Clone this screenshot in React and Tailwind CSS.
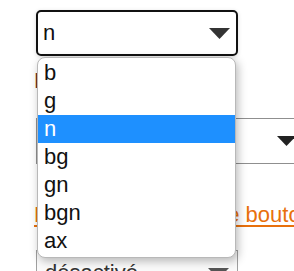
import { useState } from 'react';

const options = ['b', 'g', 'n', 'bg', 'gn', 'bgn', 'ax'];

function Caret({ className }) {
  return (
    <svg viewBox="0 0 21 11" className={className}>
      <path d="M0 0h21L10.5 11z" fill="currentColor" />
    </svg>
  );
}

export default function App() {
  const [selected] = useState('n');

  return (
    <div className="relative w-[294px] h-[271px] overflow-hidden bg-white font-['Liberation_Sans',Arial,sans-serif] text-[22px] text-[#111]">
      <div className="flex flex-col pl-9 pt-2.5">
        {/* open select */}
        <div className="w-[202px] h-[46px] border-2 border-[#111] rounded-[5px] flex items-center justify-between pl-[5px] pr-[6px] shadow-[0_1px_4px_rgba(0,0,0,0.15)]">
          <span className="leading-none">{selected}</span>
          <Caret className="w-[21px] h-[11px] text-[#333]" />
        </div>

        <p className="mt-[14px] -ml-[2px] leading-none text-[#6b3322]">Libellé</p>

        <div className="mt-[26px] w-[270px] h-[46px] border border-[#8f8f8f] flex items-center justify-between pl-2 pr-2">
          <span className="leading-none">activé</span>
          <Caret className="w-[21px] h-[10px] text-[#222]" />
        </div>

        <a href="#" className="mt-[40px] -ml-[2px] leading-none text-[#e8700c] underline underline-offset-[3px] whitespace-nowrap">
          Lien pour réactiver le bouton
        </a>

        <div className="mt-[24px] w-[202px] h-[46px] border border-[#a0a0a0] bg-[#fafafa] flex items-center justify-between pl-2 pr-2 text-[#333]">
          <span className="leading-none">désactivé</span>
          <Caret className="w-[21px] h-[11px] text-[#555]" />
        </div>
      </div>

      {/* dropdown list */}
      <ul className="absolute left-[37px] top-[57px] w-[199px] rounded-[8px] border border-[#b8b8b8] bg-white pt-px pb-[2px] overflow-hidden shadow-[2px_3px_10px_rgba(0,0,0,0.28)]">
        {options.map((o) => (
          <li
            key={o}
            className={
              o === selected
                ? 'h-[28px] leading-[28px] pl-[6px] bg-[#1e90ff] text-white'
                : 'h-[28px] leading-[28px] pl-[6px] text-[#111]'
            }
          >
            {o}
          </li>
        ))}
      </ul>
    </div>
  );
}
